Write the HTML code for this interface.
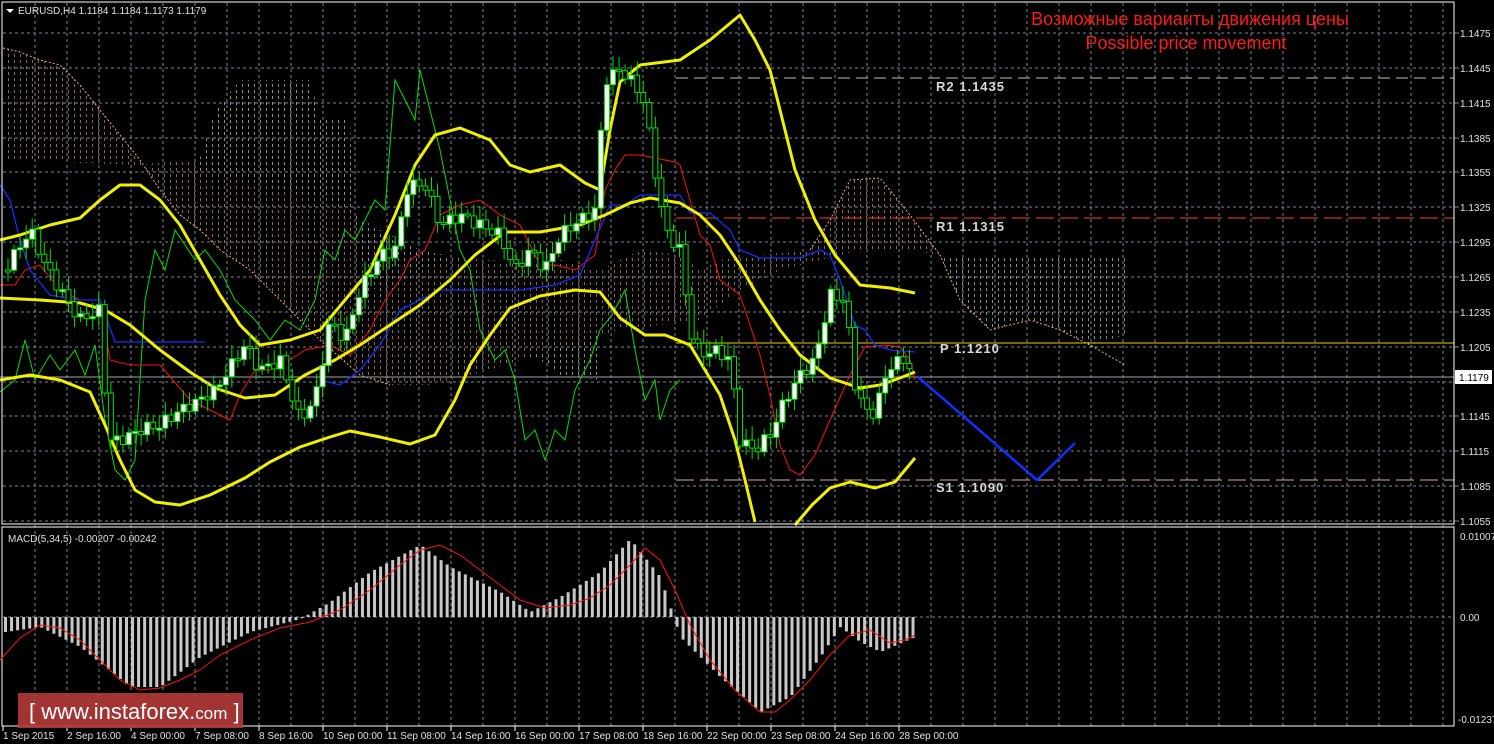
<!DOCTYPE html>
<html><head><meta charset="utf-8"><style>
html,body{margin:0;padding:0;background:#000;overflow:hidden}
svg{display:block}
text{font-family:"Liberation Sans",sans-serif}
</style></head><body>
<svg id="s" width="1494" height="744" xmlns="http://www.w3.org/2000/svg">
<defs>
<pattern id="hw" width="6" height="6" patternUnits="userSpaceOnUse"><rect x="2" y="0" width="1" height="3" fill="#e8e8e8"/></pattern>
<pattern id="ho" width="6" height="6" patternUnits="userSpaceOnUse"><rect x="2" y="0" width="1" height="3" fill="#f0a878"/></pattern>
</defs>
<rect width="1494" height="744" fill="#000"/>
<g id="grid" stroke="#7d8590" stroke-width="1" stroke-dasharray="3,3"></g>
<!-- clouds -->
<g opacity="0.6">
<polygon fill="url(#ho)" points="3,48 20,52 40,60 60,65 80,85 100,110 120,135 140,160 160,190 180,215 200,230 220,250 250,270 280,300 320,340 360,375 390,385 390,330 360,260 352,190 350,120 320,118 310,80 240,80 215,110 200,158 140,165 3,160"/>
<polygon fill="url(#hw)" points="200,158 215,110 240,82 310,80 320,118 350,120 352,190 360,260 380,300 420,330 470,345 500,350 540,360 560,375 600,380 600,290 560,280 520,270 480,262 420,250 380,230 330,200 280,190 250,180 200,170"/>
<polygon fill="url(#ho)" points="380,300 420,270 460,258 520,262 560,260 600,270 640,250 680,255 700,270 720,260 760,255 810,250 830,220 850,180 880,178 910,215 940,255 910,250 860,250 780,270 740,290 700,320 660,325 620,330 580,340 550,350 520,360 490,370 430,385 390,385"/>
<polygon fill="url(#hw)" points="930,258 1125,258 1125,335 1090,345 1060,330 1030,320 990,330 960,300 940,255"/>
</g>
<polyline fill="none" stroke="#f0a878" stroke-width="1" stroke-dasharray="2,2" points="3,48 20,52 40,60 60,65 80,85 100,110 120,135 140,160 160,190 180,215 200,230 220,250 250,270 280,300 320,340 360,375 390,385"/>
<polyline fill="none" stroke="#f0a878" stroke-width="1" stroke-dasharray="2,2" points="810,250 830,220 850,180 880,178 910,215 940,255 960,300 990,330 1030,320 1060,330 1090,345 1125,365"/>
<!-- pivot lines -->
<line x1="676" y1="78" x2="1454" y2="78" stroke="#bfbfbf" stroke-dasharray="12,6"/>
<line x1="676" y1="218" x2="1454" y2="218" stroke="#ff4010" stroke-dasharray="18,6"/>
<line x1="676" y1="343" x2="1454" y2="343" stroke="#e8d000"/>
<line x1="676" y1="480" x2="1454" y2="480" stroke="#d8a8a8" stroke-dasharray="18,6"/>
<line x1="0" y1="377" x2="1454" y2="377" stroke="#a0a4a8"/>
<g font-size="13" fill="#d8d8d8" font-weight="bold" letter-spacing="1">
<text x="936" y="91">R2 1.1435</text>
<text x="936" y="231">R1 1.1315</text>
<text x="940" y="353">P 1.1210</text>
<text x="936" y="492">S1 1.1090</text>
</g>
<!-- green -->
<polyline fill="none" stroke="#00e000" stroke-width="1" points="0,392 15,380 25,340 35,380 50,355 60,370 75,350 85,375 95,345 105,420 115,470 125,480 135,460 145,300 155,250 165,270 175,230 185,245 195,260 205,250 220,270 235,300 245,310 255,320 270,340 285,320 300,330 315,300 325,250 335,260 345,230 355,240 365,220 375,200 385,210 395,80 405,100 415,120 420,70 430,110 440,150 450,200 460,250 470,270 480,330 495,360 505,350 515,380 525,440 535,430 545,460 555,430 565,440 575,390 590,360 600,330 612,315 625,290 635,350 645,400 655,380 660,420 670,390 680,380"/>
<!-- red -->
<polyline fill="none" stroke="#ff1010" stroke-width="1" points="0,285 15,285 25,270 40,265 60,290 80,300 100,300 110,360 130,365 160,365 190,400 230,420 240,395 255,370 270,370 290,360 305,350 330,345 350,355 370,330 385,300 400,280 410,260 425,250 440,215 460,205 480,200 500,215 520,225 540,265 555,265 575,270 595,255 605,190 615,170 625,155 640,155 675,162 680,165 690,200 700,235 710,245 720,280 740,295 760,355 770,395 780,445 790,470 800,475 815,455 830,420 850,375 865,347 885,345 900,347 910,360 915,380"/>
<!-- blue -->
<polyline fill="none" stroke="#1030ff" stroke-width="1.3" points="0,185 10,200 20,240 30,270 50,295 80,300 100,300 115,342 205,342"/>
<polyline fill="none" stroke="#1030ff" stroke-width="1.3" points="320,380 340,385 360,370 380,345 400,310 420,300 440,290 520,290 555,285 580,275 595,240 610,205 625,205 640,195 680,195 690,213 710,213 730,230 740,250 760,258 800,258 820,250 830,255 840,280 855,325 865,330 875,345 890,350 915,352"/>
<polyline fill="none" stroke="#1030ff" stroke-width="2.5" points="918,377 1037,480 1075,443"/>
<!-- yellow -->
<g fill="none" stroke="#f0f000" stroke-width="3" stroke-linejoin="round">
<polyline points="0,240 20,235 50,225 80,218 100,200 120,185 140,185 160,200 180,225 200,260 220,295 240,325 260,345 290,340 320,330 345,300 370,270 395,215 415,165 435,135 460,128 490,140 510,165 530,172 560,165 585,183 600,190 610,130 620,82 640,65 680,60 710,40 740,15 755,40 770,70 780,110 795,170 815,220 835,255 860,285 890,288 915,293"/>
<polyline points="0,298 40,300 80,303 105,310 130,325 160,350 190,372 215,388 245,398 275,395 305,375 335,360 360,345 390,325 420,305 450,280 475,255 505,232 540,232 580,225 605,215 630,203 650,198 680,203 700,215 720,235 740,265 760,300 780,330 800,355 830,378 860,388 880,385 900,378 915,372"/>
<polyline points="0,380 30,375 60,380 90,392 105,425 120,460 135,490 155,502 180,505 210,495 245,478 270,462 300,447 330,437 350,431 380,437 410,444 435,435 455,400 470,365 490,335 510,308 540,296 575,290 600,292 620,318 645,335 665,335 690,345 705,370 720,395 735,440 745,480 755,522"/>
<polyline points="795,525 812,505 830,488 850,482 875,488 895,482 915,458"/>
</g>
<g id="candles"></g>
<!-- pane separator and axes -->
<rect x="2" y="2" width="1452" height="522" fill="none" stroke="#fff" stroke-width="1"/>
<rect x="2" y="527" width="1452" height="199" fill="none" stroke="#fff" stroke-width="1"/>
<line x1="2" y1="617" x2="1454" y2="617" stroke="#7d8590" stroke-dasharray="3,3"/>
<g id="macd"></g>
<polyline fill="none" stroke="#ff1010" stroke-width="1" points="0,660 20,638 40,625 60,628 80,640 100,660 120,680 140,690 160,688 180,680 200,670 220,655 250,640 280,628 310,622 340,610 370,590 400,565 420,550 440,545 460,555 480,570 500,585 520,600 545,608 570,605 590,598 610,585 630,565 645,548 660,560 675,590 690,625 710,660 735,690 760,712 775,712 790,700 810,680 830,655 850,635 870,630 890,643 905,640 915,635"/>
<text x="8" y="542" font-size="10" fill="#e0e0e0">MACD(5,34,5) -0.00207 -0.00242</text>
<g font-size="10" fill="#e0e0e0" id="yl"></g>
<rect x="1455" y="370" width="37" height="14" fill="#fff"/>
<text x="1459" y="381" font-size="10" fill="#000">1.1179</text>
<text x="1460" y="540" font-size="10" fill="#e0e0e0">0.01007</text>
<text x="1460" y="621" font-size="10" fill="#e0e0e0">0.00</text>
<text x="1458" y="723" font-size="10" fill="#e0e0e0">-0.01237</text>
<g font-size="10" fill="#e0e0e0" id="xl"></g>
<!-- header -->
<polygon points="6,9 14,9 10,13" fill="#fff"/>
<text x="18" y="14" font-size="10" fill="#e0e0e0">EURUSD,H4  1.1184 1.1184 1.1173 1.1179</text>
<text x="1190" y="25" font-size="18" fill="#ff1a1a" text-anchor="middle">Возможные варианты движения цены</text>
<text x="1186" y="49" font-size="18" fill="#ff1a1a" text-anchor="middle">Possible price movement</text>
<!-- logo -->
<rect x="18" y="693" width="225" height="35" fill="#b03838" opacity="0.92"/>
<text x="29" y="719" font-size="22" fill="#fff">[  www.instaforex.<tspan font-size="17">com</tspan> ]</text>
</svg>
<script>
(function(){
var NS="http://www.w3.org/2000/svg";
function el(p,t,a){var e=document.createElementNS(NS,t);for(var k in a)e.setAttribute(k,a[k]);p.appendChild(e);return e;}
var g=document.getElementById('grid');
for(var x=35;x<1454;x+=32)el(g,'line',{x1:x,y1:3,x2:x,y2:726});
var yl=document.getElementById('yl');
var labs=["1.1475","1.1445","1.1415","1.1385","1.1355","1.1325","1.1295","1.1265","1.1235","1.1205","1.1175","1.1145","1.1115","1.1085","1.1055"];
for(var i=0;i<15;i++){var y=Math.round(33+i*34.86);el(g,'line',{x1:3,y1:y,x2:1454,y2:y});el(g,'line',{x1:1454,y1:y,x2:1459,y2:y,"stroke-dasharray":"none"});if(i!=10){var t=el(yl,'text',{x:1460,y:y+4});t.textContent=labs[i];}}
var xl=document.getElementById('xl');
var dl=["1 Sep 2015","2 Sep 16:00","4 Sep 00:00","7 Sep 08:00","8 Sep 16:00","10 Sep 00:00","11 Sep 08:00","14 Sep 16:00","16 Sep 00:00","17 Sep 08:00","18 Sep 16:00","22 Sep 00:00","23 Sep 08:00","24 Sep 16:00","28 Sep 00:00"];
for(var i=0;i<dl.length;i++){var x=3+i*64;var t=el(xl,'text',{x:x,y:739});t.textContent=dl[i];el(g,'line',{x1:x,y1:726,x2:x,y2:731,"stroke-dasharray":"none",stroke:"#fff"});}
var kp=[[5,270],[30,230],[45,265],[60,290],[80,320],[100,310],[108,440],[120,440],[140,430],[160,425],[180,410],[200,400],[215,390],[235,360],[245,345],[260,370],[280,360],[300,420],[315,400],[330,320],[345,340],[360,290],[380,255],[395,250],[408,185],[425,185],[440,225],[460,215],[480,225],[500,235],[515,270],[530,250],[545,270],[560,235],[580,220],[595,210],[605,80],[620,70],[635,85],[645,105],[655,170],[665,230],[680,250],[690,330],[700,355],[715,350],[730,360],[740,440],[755,450],[770,435],[785,400],[800,375],[815,360],[830,295],[845,300],[855,385],[870,420],[880,395],[890,365],[905,360],[915,375]];
function f(x){for(var i=1;i<kp.length;i++)if(x<=kp[i][0]){var a=kp[i-1],b=kp[i];return a[1]+(b[1]-a[1])*(x-a[0])/(b[0]-a[0]);}return 375;}
var c=document.getElementById('candles');var prev=f(5);
for(var x=8;x<=915;x+=6.05){var cl=f(x)+Math.round(Math.sin(x*1.7)*6);var up=cl<prev;var tp=Math.min(cl,prev),bt=Math.max(cl,prev);if(bt-tp<2)bt=tp+2;
var w=4+Math.abs(Math.sin(x*0.9))*10;
el(c,'line',{x1:x,y1:tp-w,x2:x,y2:bt+w*0.8,stroke:"#00e000"});
el(c,'rect',{x:x-2.5,y:tp,width:5,height:bt-tp,fill:up?"#fff":"#000",stroke:"#00e000","stroke-width":1});prev=cl;}
var mk=[[5,-15],[40,-10],[80,-30],[130,-70],[160,-70],[200,-40],[250,-15],[300,-2],[330,15],[370,45],[420,72],[450,50],[500,25],[530,5],[560,20],[600,45],[630,78],[660,40],[680,-20],[720,-60],[760,-95],[790,-80],[820,-40],[840,-10],[860,-25],[880,-35],[915,-20]];
function m(x){for(var i=1;i<mk.length;i++)if(x<=mk[i][0]){var a=mk[i-1],b=mk[i];return a[1]+(b[1]-a[1])*(x-a[0])/(b[0]-a[0]);}return -20;}
var mg=document.getElementById('macd');
for(var x=5;x<=915;x+=6.05){var v=m(x);el(mg,'rect',{x:x-1,y:v>0?617-v:617,width:3,height:Math.abs(v),fill:"#c8c8c8"});}
})();
</script>
</body></html>
